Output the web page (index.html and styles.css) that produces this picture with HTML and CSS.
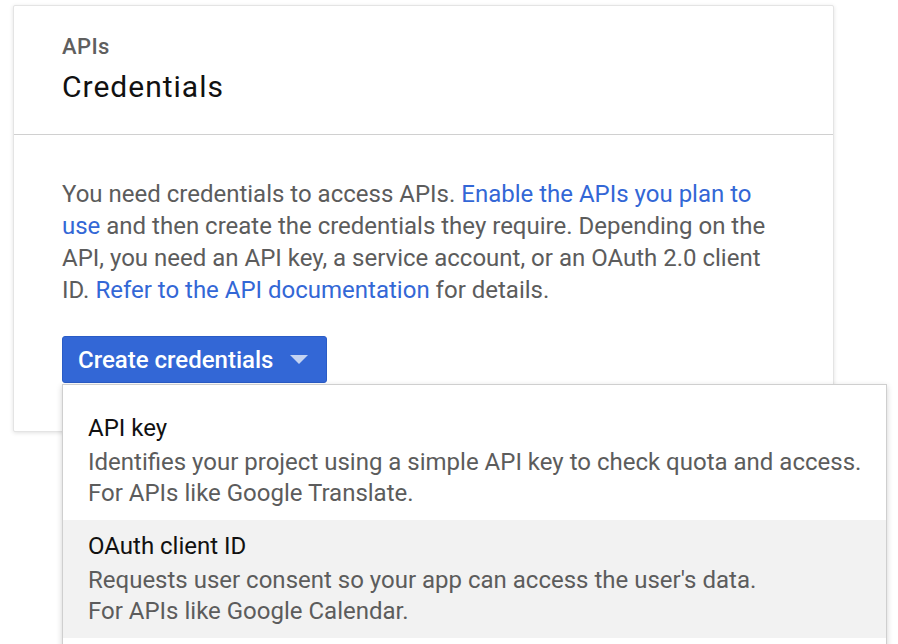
FILE: index.html
```html
<!DOCTYPE html>
<html>
<head>
<meta charset="utf-8">
<link rel="stylesheet" href="styles.css">
</head>
<body>
<div class="card">
  <div class="card-header">
    <div class="eyebrow">APIs</div>
    <h1 class="title">Credentials</h1>
  </div>
  <div class="card-body">
    <p class="intro">You need credentials to access APIs. <a class="link" href="#">Enable the APIs you plan to use</a> and then create the credentials they require. Depending on the API, you need an API key, a service account, or an OAuth 2.0 client ID. <a class="link" href="#">Refer to the API documentation</a> for details.</p>
    <div class="menu-anchor">
      <button class="btn-primary">Create credentials<span class="caret"></span></button>
      <div class="menu">
        <div class="menu-item">
          <div class="item-title">API key</div>
          <div class="item-desc">Identifies your project using a simple API key to check quota and access.<br>For APIs like Google Translate.</div>
        </div>
        <div class="menu-item is-active">
          <div class="item-title">OAuth client ID</div>
          <div class="item-desc">Requests user consent so your app can access the user's data.<br>For APIs like Google Calendar.</div>
        </div>
        <div class="menu-item">
          <div class="item-title">Service account key</div>
          <div class="item-desc">Enables server-to-server, app-level authentication using robot accounts.<br>For use with Google Cloud APIs.</div>
        </div>
      </div>
    </div>
  </div>
</div>
</body>
</html>
```
FILE: styles.css
```css
html, body {
  margin: 0;
  padding: 0;
  background: #fff;
  overflow: hidden;
  height: 644px;
}
body {
  font-family: Roboto, "Noto Sans", "Liberation Sans", sans-serif;
}
.card {
  margin: 5px 0 0 13px;
  width: 819px;
  background: #fff;
  border: 1px solid #e4e4e4;
  border-radius: 2px;
  box-shadow: 0 1px 4px rgba(0, 0, 0, 0.12);
}
.card-header {
  padding: 29px 48px 29px 48px;
  border-bottom: 1px solid #d0d0d0;
}
.eyebrow {
  font-size: 22px;
  line-height: 24px;
  font-weight: 500;
  letter-spacing: 0.4px;
  color: #5f5f5f;
}
.title {
  margin: 10px 0 0 0;
  font-size: 30px;
  line-height: 36px;
  font-weight: 400;
  letter-spacing: 1px;
  color: #111;
}
.card-body {
  padding: 43px 48px 48px 48px;
}
.intro {
  margin: 0;
  font-size: 24px;
  line-height: 32px;
  color: #5c5c5c;
}
.link {
  color: #3367d6;
  text-decoration: none;
}
.menu-anchor {
  position: relative;
  margin-top: 30px;
  display: flex;
}
.btn-primary {
  display: flex;
  align-items: center;
  height: 47px;
  padding: 0 18px 0 15px;
  border: 1px solid #2a5cc6;
  border-radius: 3px;
  background: #3367d6;
  color: #fff;
  font-family: Roboto, "Noto Sans", sans-serif;
  font-size: 24px;
  font-weight: 500;
  cursor: pointer;
}
.caret {
  margin-left: 17px;
  width: 0;
  height: 0;
  border-left: 9px solid transparent;
  border-right: 9px solid transparent;
  border-top: 9px solid #c4d3f2;
}
.menu {
  position: absolute;
  left: 0;
  top: 48px;
  width: 823px;
  padding-top: 17px;
  background: #fff;
  border: 1px solid #cfcfcf;
  box-shadow: 0 2px 6px rgba(0, 0, 0, 0.18);
}
.menu-item {
  padding: 10px 24px 11px 25px;
}
.menu-item.is-active {
  background: #f2f2f2;
}
.item-title {
  font-size: 24px;
  line-height: 32px;
  margin-bottom: 3px;
  color: #111;
}
.item-desc {
  font-size: 24px;
  line-height: 31px;
  color: #5c5c5c;
}
```
